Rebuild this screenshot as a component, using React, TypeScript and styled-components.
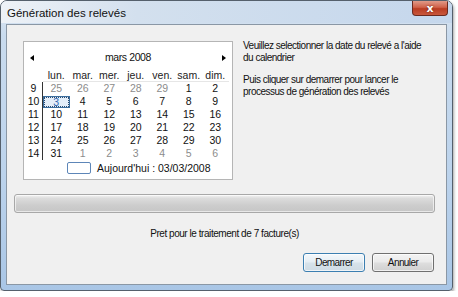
import React from "react";
import styled, { createGlobalStyle } from "styled-components";

const Global = createGlobalStyle`
  html, body { margin: 0; padding: 0; background: #ffffff; }
  body { font-family: "Liberation Sans", Arial, sans-serif; }
`;

const Window = styled.div`
  box-sizing: border-box;
  width: 453px;
  height: 291px;
  display: flex;
  flex-direction: column;
  border: 1px solid #55606c;
  border-radius: 7px 7px 4px 4px;
  background: linear-gradient(to bottom, #dfe8f2 0%, #c9dbee 12%, #bcd3ec 60%, #a9c6e6 100%);
  box-shadow: 1px 2px 3px rgba(0, 0, 0, 0.35);
  overflow: hidden;
`;

const TitleBar = styled.div`
  height: 22px;
  display: flex;
  align-items: flex-start;
  padding-left: 6px;
  background: linear-gradient(to right, #eef2f7 0%, #d3e0ee 30%, #c5d7ec 100%);
`;

const Title = styled.div`
  margin-top: 5px;
  font-size: 11.5px;
  line-height: 14px;
  color: #111;
`;

const CloseButton = styled.div`
  margin-left: auto;
  margin-right: 4px;
  width: 36px;
  height: 15px;
  box-sizing: border-box;
  border: 1px solid #6b2a1f;
  border-top: none;
  border-radius: 0 0 4px 4px;
  background: linear-gradient(to bottom, #e09a88 0%, #d0624a 45%, #b93c22 55%, #c9583c 100%);
  display: flex;
  align-items: center;
  justify-content: center;
  color: #fff;
  font-family: "DejaVu Sans", sans-serif;
  font-weight: bold;
  font-size: 11px;
  line-height: 11px;
  text-shadow: 0 0 2px #5a1a10;
`;

const Client = styled.div`
  flex: 1;
  margin: 1px 5px 5px 5px;
  border: 1px solid #8a97a5;
  background: #f0f0f0;
  display: flex;
  flex-direction: column;
`;

const TopRow = styled.div`
  display: flex;
  padding: 16px 0 0 16px;
`;

const Calendar = styled.div`
  box-sizing: border-box;
  width: 210px;
  height: 139px;
  background: #ffffff;
  border: 1px solid #b5b5b5;
  display: flex;
  flex-direction: column;
  font-size: 10.5px;
  color: #111;
`;

const CalHeader = styled.div`
  margin-top: 8px;
  height: 15px;
  display: flex;
  align-items: center;
  justify-content: space-between;
  padding: 0 6px 0 6px;
`;

const Arrow = styled.div<{ $dir: "left" | "right" }>`
  width: 0;
  height: 0;
  border-top: 3.5px solid transparent;
  border-bottom: 3.5px solid transparent;
  ${(p) =>
    p.$dir === "left"
      ? "border-right: 4px solid #000;"
      : "border-left: 4px solid #000;"}
`;

const MonthLabel = styled.div`
  line-height: 15px;
  letter-spacing: -0.4px;
`;

const Grid = styled.div`
  margin-top: 4px;
  display: grid;
  grid-template-columns: 19px repeat(7, 26.5px);
  grid-auto-rows: 13px;
`;

const DayName = styled.div`
  text-align: center;
  line-height: 12px;
  border-bottom: 1px solid #e6e6e6;
  color: #222;
`;

const Corner = styled.div``;

const WeekNum = styled.div`
  box-sizing: border-box;
  text-align: center;
  line-height: 13px;
  border-right: 1px solid #333;
  padding-left: 1px;
`;

const DayCell = styled.div<{ $muted?: boolean; $today?: boolean }>`
  box-sizing: border-box;
  text-align: center;
  line-height: 11px;
  height: 13px;
  padding-top: 1px;
  color: ${(p) => (p.$muted ? "#8c8c8c" : "#111")};
  ${(p) =>
    p.$today
      ? `
    border: 1px solid #3b6e9e;
    background: #e4eef9;
    color: #2f67b0;
    outline: 1px dotted #2a4a70;
    outline-offset: -2px;
    line-height: 10px;
    padding-top: 0;
    margin-top: 1px;
    height: 12px;
  `
      : ""}
`;

const CalFooter = styled.div`
  margin-top: 1px;
  height: 14px;
  display: flex;
  align-items: center;
  padding-left: 43px;
  gap: 6px;
`;

const TodayBox = styled.div`
  box-sizing: border-box;
  width: 24px;
  height: 12px;
  border: 1px solid #5d86b8;
  border-radius: 2px;
`;

const TodayLabel = styled.div`
  line-height: 14px;
`;

const Instructions = styled.div`
  margin-left: 10px;
  margin-top: -1px;
  font-size: 10px;
  line-height: 12px;
  letter-spacing: -0.5px;
  color: #111;
  width: 190px;
`;

const Para = styled.p`
  margin: 0 0 10px 0;
`;

const Progress = styled.div`
  box-sizing: border-box;
  margin: 14px 11px 0 7px;
  height: 19px;
  border: 1px solid #a8a8a8;
  border-radius: 3px;
  background: linear-gradient(to bottom, #f2f2f2 0%, #dcdcdc 20%, #cdcdcd 60%, #c6c6c6 100%);
  box-shadow: inset 0 0 0 1px rgba(255, 255, 255, 0.6);
`;

const Status = styled.div`
  margin-top: 14px;
  text-align: center;
  font-size: 10px;
  line-height: 14px;
  letter-spacing: -0.45px;
  color: #111;
  padding-right: 4px;
`;

const ButtonRow = styled.div`
  margin-top: 12px;
  display: flex;
  justify-content: flex-end;
  gap: 7px;
  padding-right: 12px;
`;

const Button = styled.div<{ $default?: boolean }>`
  box-sizing: border-box;
  width: 62px;
  height: 19px;
  border-radius: 3px;
  border: 1px solid ${(p) => (p.$default ? "#3c7fb1" : "#707070")};
  background: ${(p) =>
    p.$default
      ? "linear-gradient(to bottom, #f4f8fb 0%, #e6eef4 45%, #d6e2ea 55%, #cfdbe4 100%)"
      : "linear-gradient(to bottom, #f3f3f3 0%, #ebebeb 45%, #dddddd 55%, #d0d0d0 100%)"};
  box-shadow: inset 0 0 0 1px rgba(255, 255, 255, 0.7);
  display: flex;
  align-items: center;
  justify-content: center;
  font-size: 10px;
  letter-spacing: -0.6px;
  color: #111;
`;

const dayNames = ["lun.", "mar.", "mer.", "jeu.", "ven.", "sam.", "dim."];

type Day = { n: number; muted?: boolean; today?: boolean };

const weeks: { w: number; days: Day[] }[] = [
  { w: 9, days: [{ n: 25, muted: true }, { n: 26, muted: true }, { n: 27, muted: true }, { n: 28, muted: true }, { n: 29, muted: true }, { n: 1 }, { n: 2 }] },
  { w: 10, days: [{ n: 3, today: true }, { n: 4 }, { n: 5 }, { n: 6 }, { n: 7 }, { n: 8 }, { n: 9 }] },
  { w: 11, days: [10, 11, 12, 13, 14, 15, 16].map((n) => ({ n })) },
  { w: 12, days: [17, 18, 19, 20, 21, 22, 23].map((n) => ({ n })) },
  { w: 13, days: [24, 25, 26, 27, 28, 29, 30].map((n) => ({ n })) },
  { w: 14, days: [{ n: 31 }, { n: 1, muted: true }, { n: 2, muted: true }, { n: 3, muted: true }, { n: 4, muted: true }, { n: 5, muted: true }, { n: 6, muted: true }] },
];

export default function App() {
  return (
    <>
      <Global />
      <Window>
        <TitleBar>
          <Title>Génération des relevés</Title>
          <CloseButton>x</CloseButton>
        </TitleBar>
        <Client>
          <TopRow>
            <Calendar>
              <CalHeader>
                <Arrow $dir="left" />
                <MonthLabel>mars 2008</MonthLabel>
                <Arrow $dir="right" />
              </CalHeader>
              <Grid>
                <Corner />
                {dayNames.map((d) => (
                  <DayName key={d}>{d}</DayName>
                ))}
                {weeks.map((wk) => (
                  <React.Fragment key={wk.w}>
                    <WeekNum>{wk.w}</WeekNum>
                    {wk.days.map((d, i) => (
                      <DayCell key={i} $muted={d.muted} $today={d.today}>
                        {d.n}
                      </DayCell>
                    ))}
                  </React.Fragment>
                ))}
              </Grid>
              <CalFooter>
                <TodayBox />
                <TodayLabel>Aujourd'hui : 03/03/2008</TodayLabel>
              </CalFooter>
            </Calendar>
            <Instructions>
              <Para>
                Veuillez selectionner la date du relevé a l'aide du calendrier
              </Para>
              <Para>
                Puis cliquer sur demarrer pour lancer le processus de génération des relevés
              </Para>
            </Instructions>
          </TopRow>
          <Progress />
          <Status>Pret pour le traitement de 7 facture(s)</Status>
          <ButtonRow>
            <Button $default>Demarrer</Button>
            <Button>Annuler</Button>
          </ButtonRow>
        </Client>
      </Window>
    </>
  );
}
